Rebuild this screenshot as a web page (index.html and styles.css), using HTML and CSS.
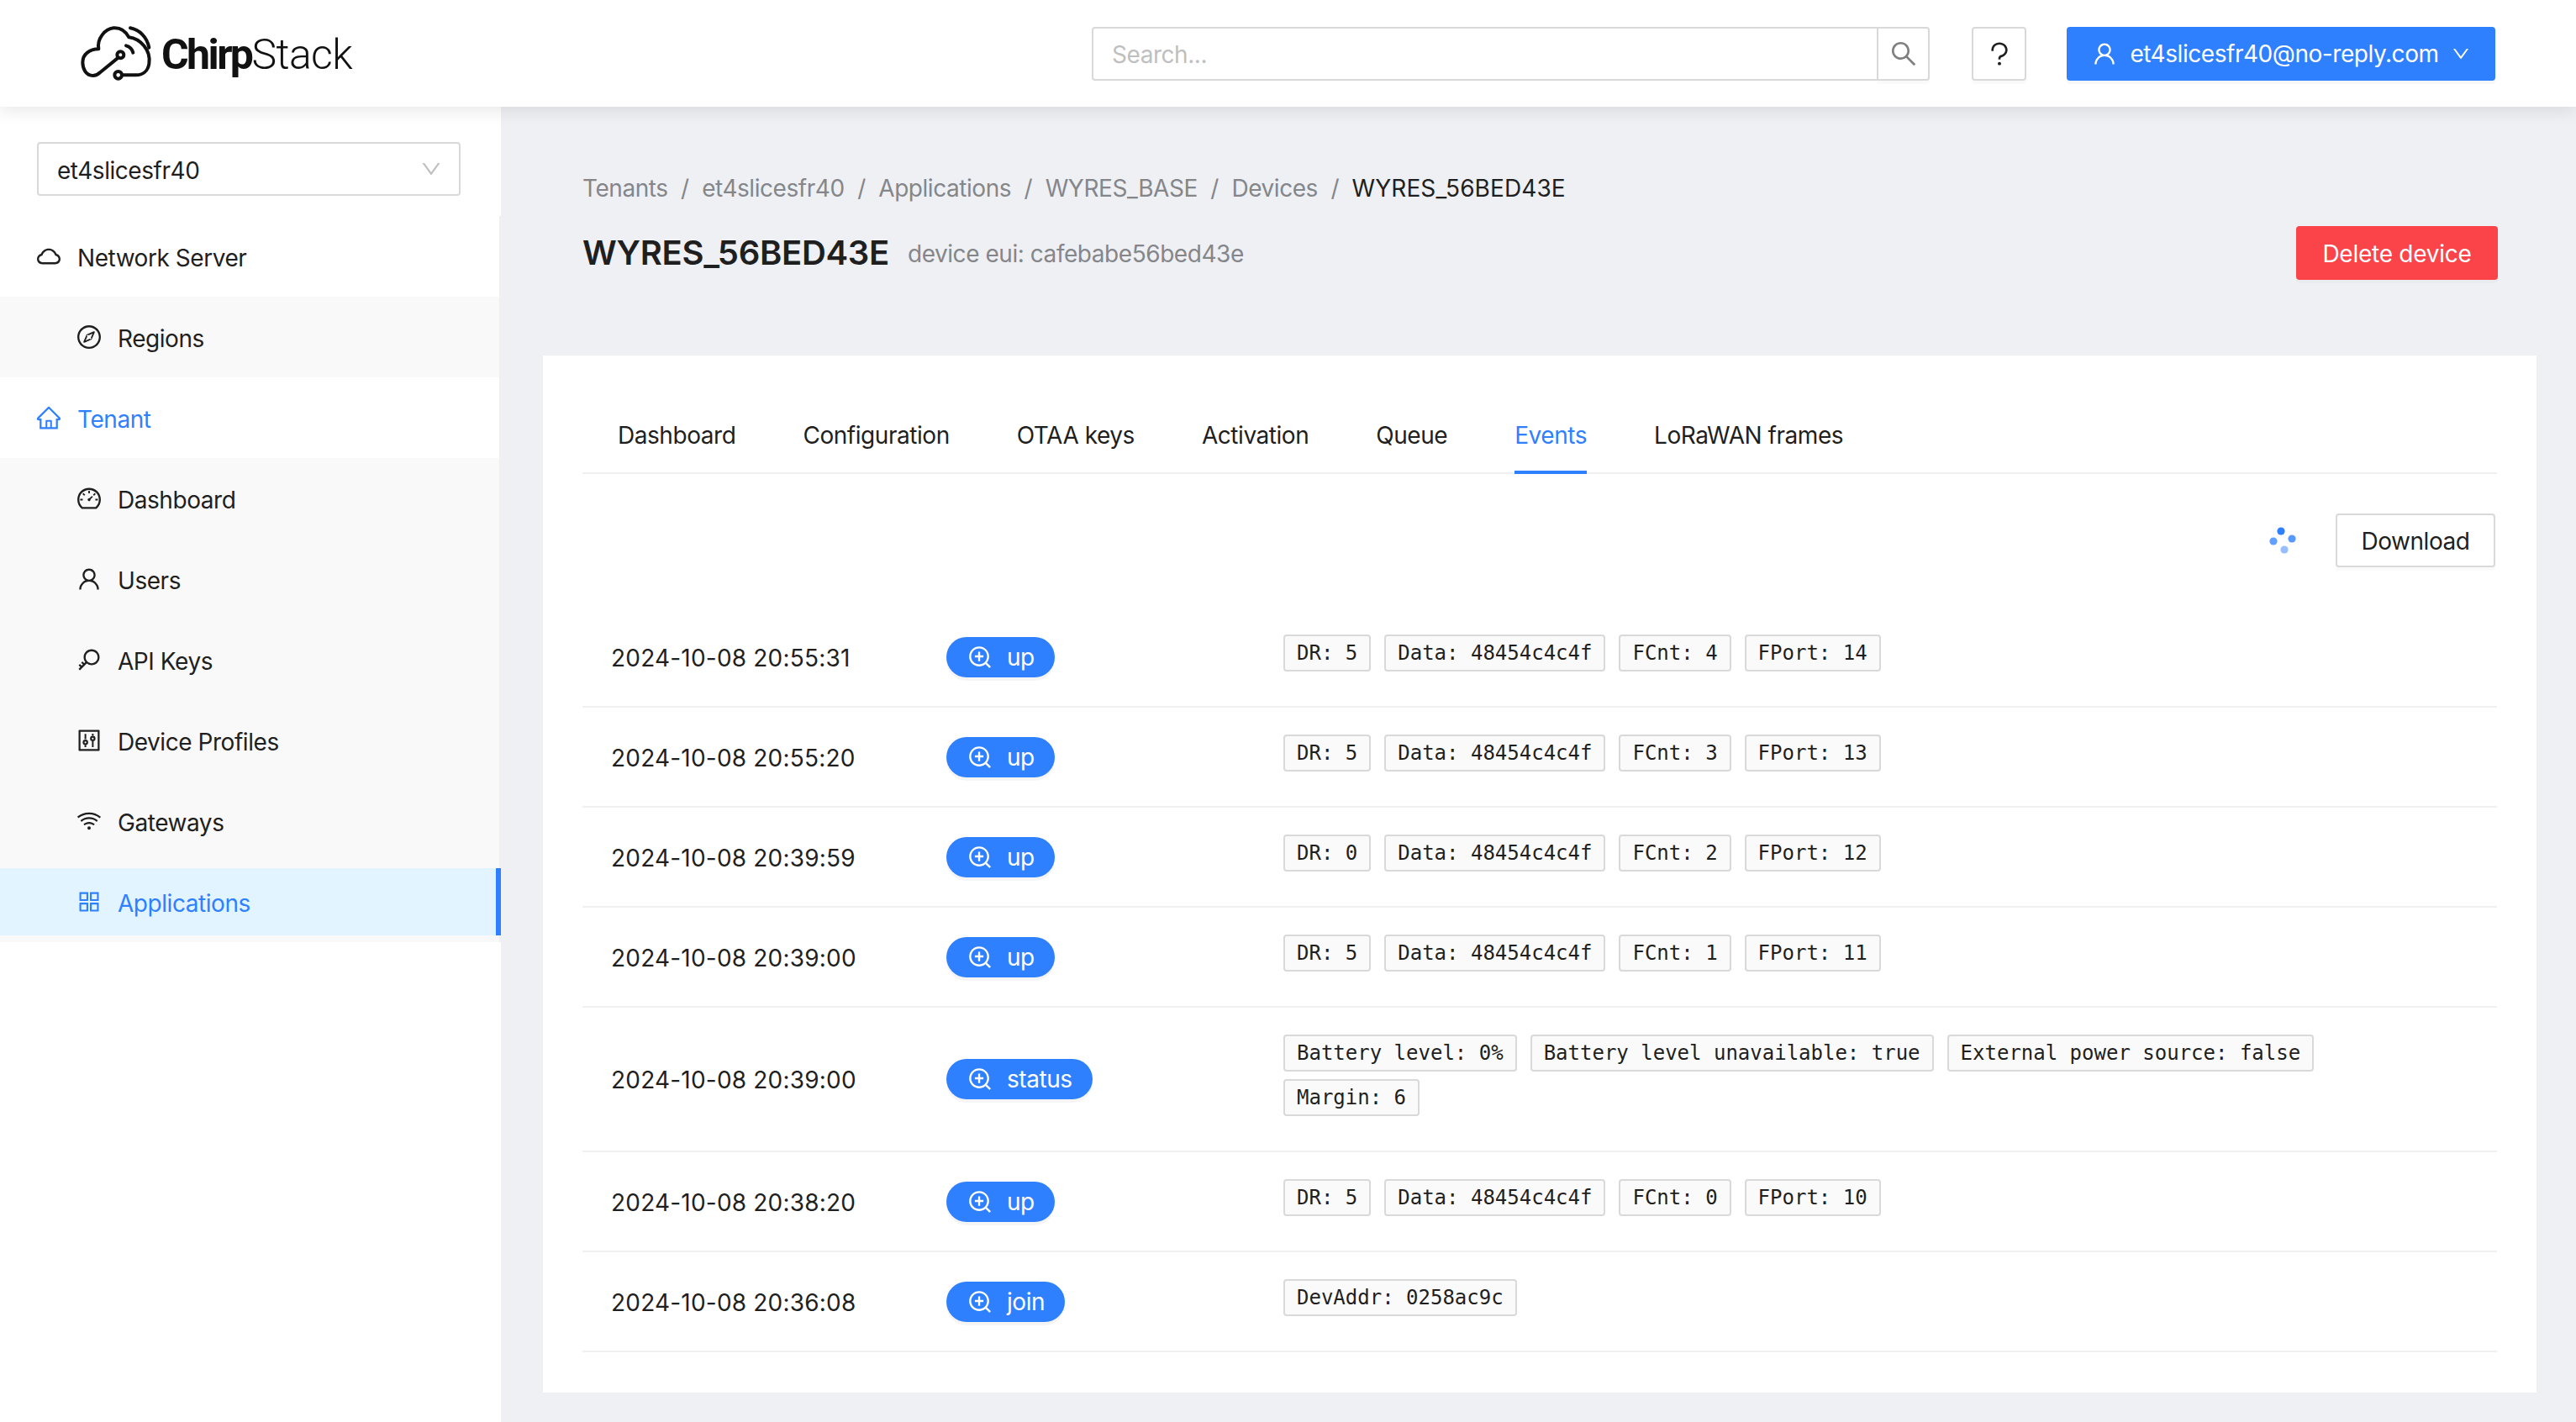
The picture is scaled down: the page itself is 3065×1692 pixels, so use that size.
FILE: index.html
```html
<!DOCTYPE html>
<html lang="en">
<head>
    <meta charset="UTF-8">
    <title>ChirpStack LoRaWAN Network Server</title>
    <link rel="stylesheet" href="styles.css">
</head>
<body>
    <svg class="sprites" xmlns="http://www.w3.org/2000/svg">
        <symbol id="i-zoom" viewBox="0 0 1024 1024"><path d="M637 443H519V309c0-4.4-3.6-8-8-8h-60c-4.4 0-8 3.6-8 8v134H325c-4.4 0-8 3.6-8 8v60c0 4.4 3.6 8 8 8h118v134c0 4.4 3.6 8 8 8h60c4.4 0 8-3.6 8-8V519h118c4.4 0 8-3.6 8-8v-60c0-4.4-3.6-8-8-8zm284 424L775 721c122.1-148.9 113.6-369.5-26-509-148-148.1-388.4-148.1-537 0-148.1 148.6-148.1 389 0 537 139.5 139.6 360.1 148.1 509 26l146 146c3.2 2.8 8.3 2.8 11 0l43-43c2.8-2.7 2.8-7.8 0-11zM696 696c-118.8 118.7-311.2 118.7-430 0-118.7-118.8-118.7-311.2 0-430 118.8-118.7 311.2-118.7 430 0 118.7 118.8 118.7 311.2 0 430z"/></symbol>
        <symbol id="i-down" viewBox="0 0 1024 1024"><path d="M884 256h-75c-5.1 0-9.9 2.5-12.9 6.6L512 654.2 227.9 262.6c-3-4.1-7.8-6.6-12.9-6.6h-75c-6.5 0-10.3 7.4-6.5 12.7l352.6 486.1c12.8 17.6 39 17.6 51.7 0l352.6-486.1c3.9-5.3.1-12.7-6.4-12.7z"/></symbol>
        <symbol id="i-user" viewBox="0 0 1024 1024"><path d="M858.5 763.6a374 374 0 0 0-80.6-119.5 375.63 375.63 0 0 0-119.5-80.6c-.4-.2-.8-.3-1.2-.5C719.5 518 760 444.7 760 362c0-137-111-248-248-248S264 225 264 362c0 82.7 40.5 156 102.8 201.1-.4.2-.8.3-1.2.5-44.8 18.9-85 46-119.5 80.6a375.63 375.63 0 0 0-80.6 119.5A371.7 371.7 0 0 0 136 901.8a8 8 0 0 0 8 8.2h60c4.4 0 7.9-3.5 8-7.8 2-77.2 33-149.5 87.8-204.3 56.7-56.7 132-87.9 212.2-87.9s155.5 31.2 212.2 87.9C779 752.7 810 825 812 902.2c.1 4.4 3.6 7.8 8 7.8h60a8 8 0 0 0 8-8.2c-1-47.8-10.9-94.3-29.5-138.2zM512 534c-45.9 0-89.1-17.9-121.6-50.4S340 407.9 340 362c0-45.9 17.9-89.1 50.4-121.6S466.1 190 512 190s89.1 17.9 121.6 50.4S684 316.1 684 362c0 45.9-17.9 89.1-50.4 121.6S557.9 534 512 534z"/></symbol>
    </svg>

    <header class="topbar">
        <div class="logo">
            <svg class="logo-mark" viewBox="0 0 300 225" fill="none" stroke="#111" stroke-width="12" stroke-linecap="round" stroke-linejoin="round">
                <path d="M152 128L88 180Q75 192 62 192C35 192 25 165 25 145C25 115 50 97 82 97C75 60 105 25 135 22C165 20 182 40 190 55C230 60 270 100 262 150C258 175 240 190 215 190H166"/>
                <circle cx="160" cy="118" r="12"/>
                <circle cx="152" cy="190" r="13"/>
                <path d="M195 22C228 28 255 55 262 92"/>
                <path d="M180 85C192 88 202 98 205 110"/>
            </svg>
            <span class="logo-text"><b>Chirp</b>Stack</span>
        </div>
        <div class="search">
            <div class="search-input">Search...</div>
            <div class="search-btn">
                <svg class="icon icon-large" viewBox="0 0 1024 1024"><path d="M909.6 854.5L649.9 594.8C690.2 542.7 712 479 712 412c0-80.2-31.3-155.4-87.9-212.1-56.6-56.7-132-87.9-212.1-87.9s-155.5 31.3-212.1 87.9C143.2 256.5 112 331.8 112 412c0 80.1 31.3 155.5 87.9 212.1C256.5 680.8 331.8 712 412 712c67 0 130.6-21.8 182.7-62l259.7 259.6a8.2 8.2 0 0 0 11.6 0l43.6-43.5a8.2 8.2 0 0 0 0-11.6zM570.4 570.4C528 612.7 471.8 636 412 636s-116-23.3-158.4-65.6C211.3 528 188 471.8 188 412s23.3-116.1 65.6-158.4C296 211.3 352.2 188 412 188s116.1 23.2 158.4 65.6S636 352.2 636 412s-23.3 116.1-65.6 158.4z"/></svg>
            </div>
        </div>
        <div class="help-btn">
            <svg class="icon icon-large" viewBox="0 0 1024 1024"><path d="M764 280.9c-14-30.6-33.9-58.1-59.3-81.6C653.1 151.4 584.6 125 512 125s-141.1 26.4-192.7 74.2c-25.4 23.6-45.3 51-59.3 81.7-14.6 32-22 65.9-22 100.9v27c0 6.2 5 11.2 11.2 11.2h54c6.2 0 11.2-5 11.2-11.2v-27c0-99.5 88.6-180.4 197.6-180.4s197.6 80.9 197.6 180.4c0 40.8-14.5 79.2-42 111.2-27.2 31.7-65.6 54.4-108.1 64-24.3 5.5-46.2 19.2-61.7 38.8a110.85 110.85 0 0 0-23.9 68.6v31.4c0 6.2 5 11.2 11.2 11.2h54c6.2 0 11.2-5 11.2-11.2v-31.4c0-15.7 10.9-29.5 26-32.9 58.4-13.2 111.4-44.7 149.3-88.7 19.1-22.3 34-47.1 44.3-74 10.7-27.9 16.1-57.2 16.1-87 0-35-7.4-69-22-100.9zM512 787c-30.9 0-56 25.1-56 56s25.1 56 56 56 56-25.1 56-56-25.1-56-56-56z"/></svg>
        </div>
        <div class="user-btn">
            <svg class="icon"><use href="#i-user"/></svg>
            <span>et4slicesfr40@no-reply.com</span>
            <svg class="icon icon-small"><use href="#i-down"/></svg>
        </div>
    </header>

    <div class="layout">
        <aside class="sidebar">
            <div class="tenant-select">
                <span>et4slicesfr40</span>
                <svg class="icon"><use href="#i-down"/></svg>
            </div>
            <nav class="menu">
                <div class="menu-top">
                    <div class="menu-item">
                        <svg class="icon" viewBox="0 0 1024 1024"><path d="M811.4 418.7C765.6 297.9 648.9 212 512.2 212S258.8 297.8 213 418.6C127.3 441.1 64 519.1 64 612c0 110.5 89.5 200 199.9 200h496.2C870.5 812 960 722.5 960 612c0-92.7-63.1-170.7-148.6-193.3zm36.3 281a123.07 123.07 0 0 1-87.6 36.3H263.9c-33.1 0-64.2-12.9-87.6-36.3A123.3 123.3 0 0 1 140 612c0-28 9.1-54.3 26.2-76.3a125.7 125.7 0 0 1 66.1-43.7l37.9-9.9 13.9-36.6c8.6-22.8 20.6-44.1 35.7-63.4a245.6 245.6 0 0 1 52.4-49.9c41.1-28.9 89.5-44.2 140-44.2s98.9 15.3 140 44.2c19.9 14 37.5 30.8 52.4 49.9 15.1 19.3 27.1 40.6 35.7 63.4l13.8 36.5 37.8 10c54.3 14.5 92.1 63.8 92.1 120 0 33.1-12.9 64.3-36.3 87.7z"/></svg>
                        <span>Network Server</span>
                    </div>
                </div>
                <div class="menu-sub">
                    <div class="menu-item">
                        <svg class="icon" viewBox="0 0 1024 1024"><path d="M512 64C264.6 64 64 264.6 64 512s200.6 448 448 448 448-200.6 448-448S759.4 64 512 64zm0 820c-205.4 0-372-166.6-372-372s166.6-372 372-372 372 166.6 372 372-166.6 372-372 372zm198.4-588.1a32 32 0 0 0-24.5.5L414.9 415 296.4 686c-3.6 8.2-3.6 17.5 0 25.7 3.4 7.8 9.7 13.9 17.7 17 3.8 1.5 7.7 2.2 11.7 2.2 4.4 0 8.7-.9 12.8-2.7l271-118.6 118.5-271a32.06 32.06 0 0 0-17.7-42.7zM576.8 534.4l26.2 26.2-42.4 42.4-26.2-26.2L380 644.4 447.5 490 422 464.4l42.4-42.4 25.5 25.5L644.4 380l-67.6 154.4z"/></svg>
                        <span>Regions</span>
                    </div>
                </div>
                <div class="menu-top">
                    <div class="menu-item menu-active">
                        <svg class="icon" viewBox="0 0 1024 1024"><path d="M946.5 505L560.1 118.8l-25.9-25.9a31.5 31.5 0 0 0-44.4 0L77.5 505a63.9 63.9 0 0 0-18.8 46c.4 35.2 29.7 63.3 64.9 63.3h42.5V940h691.8V614.3h43.4c17.1 0 33.2-6.7 45.3-18.8a63.6 63.6 0 0 0 18.7-45.3c0-17-6.7-33.1-18.8-45.2zM568 868H456V664h112v204zm217.9-325.7V868H632V640c0-22.1-17.9-40-40-40H432c-22.1 0-40 17.9-40 40v228H238.1V542.3h-96l370-369.7 23.1 23.1L882 542.3h-96.1z"/></svg>
                        <span>Tenant</span>
                    </div>
                </div>
                <div class="menu-sub">
                    <div class="menu-item">
                        <svg class="icon" viewBox="0 0 1024 1024"><path d="M924.8 385.6a446.7 446.7 0 0 0-96-142.4 446.7 446.7 0 0 0-142.4-96C631.1 123.8 572.5 112 512 112s-119.1 11.8-174.4 35.2a446.7 446.7 0 0 0-142.4 96 446.7 446.7 0 0 0-96 142.4C75.8 440.9 64 499.5 64 560c0 132.7 58.3 257.7 159.9 343.1l1.7 1.4c5.8 4.8 13.1 7.5 20.6 7.5h531.7c7.5 0 14.8-2.7 20.6-7.5l1.7-1.4C901.7 817.7 960 692.7 960 560c0-60.5-11.9-119.1-35.2-174.4zM761.4 836H262.6A371.12 371.12 0 0 1 140 560c0-99.4 38.7-192.8 109-263 70.3-70.3 163.7-109 263-109 99.4 0 192.8 38.7 263 109 70.3 70.3 109 163.7 109 263 0 105.6-44.5 205.5-122.6 276zM623.5 421.5a8.03 8.03 0 0 0-11.3 0L527.7 506c-18.7-5-39.4-.2-54.1 14.5a55.95 55.95 0 0 0 0 79.2 55.95 55.95 0 0 0 79.2 0 55.87 55.87 0 0 0 14.5-54.1l84.5-84.5c3.1-3.1 3.1-8.2 0-11.3l-28.3-28.3zM490 320h44c4.4 0 8-3.6 8-8v-80c0-4.4-3.6-8-8-8h-44c-4.4 0-8 3.6-8 8v80c0 4.4 3.6 8 8 8zm260 218v44c0 4.4 3.6 8 8 8h80c4.4 0 8-3.6 8-8v-44c0-4.4-3.6-8-8-8h-80c-4.4 0-8 3.6-8 8zm12.7-197.2l-31.1-31.1a8.03 8.03 0 0 0-11.3 0l-56.6 56.6a8.03 8.03 0 0 0 0 11.3l31.1 31.1c3.1 3.1 8.2 3.1 11.3 0l56.6-56.6c3.1-3.1 3.1-8.2 0-11.3zm-458.6-31.1a8.03 8.03 0 0 0-11.3 0l-31.1 31.1a8.03 8.03 0 0 0 0 11.3l56.6 56.6c3.1 3.1 8.2 3.1 11.3 0l31.1-31.1c3.1-3.1 3.1-8.2 0-11.3l-56.6-56.6zM262 530h-80c-4.4 0-8 3.6-8 8v44c0 4.4 3.6 8 8 8h80c4.4 0 8-3.6 8-8v-44c0-4.4-3.6-8-8-8z"/></svg>
                        <span>Dashboard</span>
                    </div>
                    <div class="menu-item">
                        <svg class="icon"><use href="#i-user"/></svg>
                        <span>Users</span>
                    </div>
                    <div class="menu-item">
                        <svg class="icon" viewBox="0 0 1024 1024"><path d="M608 112c-167.9 0-304 136.1-304 304 0 70.3 23.9 135 63.9 186.5l-41.1 41.1-62.3-62.3a8.15 8.15 0 0 0-11.4 0l-39.8 39.8a8.15 8.15 0 0 0 0 11.4l62.3 62.3-44.9 44.9-62.3-62.3a8.15 8.15 0 0 0-11.4 0l-39.8 39.8a8.15 8.15 0 0 0 0 11.4l62.3 62.3-65.3 65.3a8.03 8.03 0 0 0 0 11.3l42.3 42.3c3.1 3.1 8.2 3.1 11.3 0l253.6-253.6A304.06 304.06 0 0 0 608 720c167.9 0 304-136.1 304-304S775.9 112 608 112zm161.2 465.2C726.2 620.3 668.9 644 608 644c-60.9 0-118.2-23.7-161.2-66.8-43.1-43-66.8-100.3-66.8-161.2 0-60.9 23.7-118.2 66.8-161.2 43-43.1 100.3-66.8 161.2-66.8 60.9 0 118.2 23.7 161.2 66.8 43.1 43 66.8 100.3 66.8 161.2 0 60.9-23.7 118.2-66.8 161.2z"/></svg>
                        <span>API Keys</span>
                    </div>
                    <div class="menu-item">
                        <svg class="icon" viewBox="0 0 1024 1024"><path d="M880 112H144c-17.7 0-32 14.3-32 32v736c0 17.7 14.3 32 32 32h736c17.7 0 32-14.3 32-32V144c0-17.7-14.3-32-32-32zm-40 728H184V184h656v656z"/><path d="M340 260h64v200h-64zM340 680h64v90h-64zM620 256h64v80h-64zM620 540h64v230h-64z"/><path fill-rule="evenodd" d="M372 480a104 104 0 1 0 0 208 104 104 0 1 0 0-208zm0 68a36 36 0 1 1 0 72 36 36 0 1 1 0-72zM652 336a104 104 0 1 0 0 208 104 104 0 1 0 0-208zm0 68a36 36 0 1 1 0 72 36 36 0 1 1 0-72z"/></svg>
                        <span>Device Profiles</span>
                    </div>
                    <div class="menu-item">
                        <svg class="icon" viewBox="0 0 1024 1024"><path d="M723 620.5C666.8 571.6 593.4 542 513 542s-153.8 29.6-210.1 78.6a8.1 8.1 0 0 0-.8 11.2l36 42.9c2.9 3.4 8 3.8 11.4.9C393.1 637.2 450.3 614 513 614s119.9 23.2 163.5 61.5c3.4 2.9 8.5 2.5 11.4-.9l36-42.9c2.8-3.3 2.4-8.3-.9-11.2zm117.4-140.1C751.7 406.5 637.6 362 513 362s-238.7 44.5-327.5 118.4a8.05 8.05 0 0 0-1 11.3l36 42.9c2.8 3.4 7.9 3.8 11.2 1C308 472.2 406.1 434 513 434s205 38.2 281.2 101.6c3.4 2.8 8.4 2.4 11.2-1l36-42.9c2.8-3.4 2.4-8.5-1-11.3zm116.7-139C835.7 241.8 680.3 182 511 182c-168.2 0-322.6 59-443.7 157.4a8 8 0 0 0-1.1 11.4l36 42.9c2.8 3.3 7.8 3.8 11.1 1.1C222 306.7 360.3 254 511 254c151.8 0 291 53.5 400 142.7 3.4 2.8 8.4 2.3 11.2-1.1l36-42.9c2.9-3.4 2.4-8.5-1.1-11.3zM448 778a64 64 0 1 0 128 0 64 64 0 1 0-128 0z"/></svg>
                        <span>Gateways</span>
                    </div>
                    <div class="menu-item menu-selected">
                        <svg class="icon" viewBox="0 0 1024 1024"><path d="M464 144H160c-8.8 0-16 7.2-16 16v304c0 8.8 7.2 16 16 16h304c8.8 0 16-7.2 16-16V160c0-8.8-7.2-16-16-16zm-52 268H212V212h200v200zm452-268H560c-8.8 0-16 7.2-16 16v304c0 8.8 7.2 16 16 16h304c8.8 0 16-7.2 16-16V160c0-8.8-7.2-16-16-16zm-52 268H612V212h200v200zM464 544H160c-8.8 0-16 7.2-16 16v304c0 8.8 7.2 16 16 16h304c8.8 0 16-7.2 16-16V560c0-8.8-7.2-16-16-16zm-52 268H212V612h200v200zm452-268H560c-8.8 0-16 7.2-16 16v304c0 8.8 7.2 16 16 16h304c8.8 0 16-7.2 16-16V560c0-8.8-7.2-16-16-16zm-52 268H612V612h200v200z"/></svg>
                        <span>Applications</span>
                    </div>
                </div>
            </nav>
        </aside>

        <main class="content">
            <div class="page-head">
                <div class="breadcrumb">
                    <span>Tenants</span><i>/</i>
                    <span>et4slicesfr40</span><i>/</i>
                    <span>Applications</span><i>/</i>
                    <span>WYRES_BASE</span><i>/</i>
                    <span>Devices</span><i>/</i>
                    <span class="current">WYRES_56BED43E</span>
                </div>
                <div class="title-row">
                    <h1>WYRES_56BED43E</h1>
                    <span class="subtitle">device eui: cafebabe56bed43e</span>
                    <div class="btn-delete">Delete device</div>
                </div>
            </div>

            <section class="card">
                <div class="tabs">
                    <div class="tab">Dashboard</div>
                    <div class="tab">Configuration</div>
                    <div class="tab">OTAA keys</div>
                    <div class="tab">Activation</div>
                    <div class="tab">Queue</div>
                    <div class="tab tab-active">Events</div>
                    <div class="tab">LoRaWAN frames</div>
                </div>

                <div class="toolbar">
                    <svg class="spinner" viewBox="0 0 32 32">
                        <circle cx="14" cy="5" r="4.6" fill="#2e80ff"/>
                        <circle cx="27" cy="14" r="4.6" fill="#2e80ff" opacity=".8"/>
                        <circle cx="18" cy="27" r="4.6" fill="#2e80ff" opacity=".5"/>
                        <circle cx="5" cy="17" r="4.6" fill="#2e80ff" opacity=".75"/>
                    </svg>
                    <div class="btn-download">Download</div>
                </div>

                <div class="event-row">
                    <div class="event-time">2024-10-08 20:55:31</div>
                    <div class="event-type"><span class="badge"><svg class="icon"><use href="#i-zoom"/></svg>up</span></div>
                    <div class="tags"><span class="tag">DR: 5</span><span class="tag">Data: 48454c4c4f</span><span class="tag">FCnt: 4</span><span class="tag">FPort: 14</span></div>
                </div>
                <div class="event-row">
                    <div class="event-time">2024-10-08 20:55:20</div>
                    <div class="event-type"><span class="badge"><svg class="icon"><use href="#i-zoom"/></svg>up</span></div>
                    <div class="tags"><span class="tag">DR: 5</span><span class="tag">Data: 48454c4c4f</span><span class="tag">FCnt: 3</span><span class="tag">FPort: 13</span></div>
                </div>
                <div class="event-row">
                    <div class="event-time">2024-10-08 20:39:59</div>
                    <div class="event-type"><span class="badge"><svg class="icon"><use href="#i-zoom"/></svg>up</span></div>
                    <div class="tags"><span class="tag">DR: 0</span><span class="tag">Data: 48454c4c4f</span><span class="tag">FCnt: 2</span><span class="tag">FPort: 12</span></div>
                </div>
                <div class="event-row">
                    <div class="event-time">2024-10-08 20:39:00</div>
                    <div class="event-type"><span class="badge"><svg class="icon"><use href="#i-zoom"/></svg>up</span></div>
                    <div class="tags"><span class="tag">DR: 5</span><span class="tag">Data: 48454c4c4f</span><span class="tag">FCnt: 1</span><span class="tag">FPort: 11</span></div>
                </div>
                <div class="event-row">
                    <div class="event-time">2024-10-08 20:39:00</div>
                    <div class="event-type"><span class="badge"><svg class="icon"><use href="#i-zoom"/></svg>status</span></div>
                    <div class="tags"><span class="tag">Battery level: 0%</span><span class="tag">Battery level unavailable: true</span><span class="tag">External power source: false</span><span class="tag">Margin: 6</span></div>
                </div>
                <div class="event-row">
                    <div class="event-time">2024-10-08 20:38:20</div>
                    <div class="event-type"><span class="badge"><svg class="icon"><use href="#i-zoom"/></svg>up</span></div>
                    <div class="tags"><span class="tag">DR: 5</span><span class="tag">Data: 48454c4c4f</span><span class="tag">FCnt: 0</span><span class="tag">FPort: 10</span></div>
                </div>
                <div class="event-row">
                    <div class="event-time">2024-10-08 20:36:08</div>
                    <div class="event-type"><span class="badge"><svg class="icon"><use href="#i-zoom"/></svg>join</span></div>
                    <div class="tags"><span class="tag">DevAddr: 0258ac9c</span></div>
                </div>
            </section>
        </main>
    </div>
</body>
</html>
```

FILE: styles.css
```css
* {
    box-sizing: border-box;
}
body {
    margin: 0;
    height: 1692px;
    overflow: hidden;
    display: flex;
    flex-direction: column;
    background: #eef0f4;
    color: #1f1f1f;
    font-family: Inter, "Noto Sans", sans-serif;
    font-size: 28px;
    line-height: 44px;
    letter-spacing: -0.45px;
}
.sprites {
    display: none;
}
.icon {
    width: 32px;
    height: 32px;
    flex: none;
    fill: currentColor;
}
.icon-small {
    width: 24px;
    height: 24px;
}
.icon-large {
    width: 36px;
    height: 36px;
}

/* top bar */
.topbar {
    height: 127px;
    flex: none;
    display: flex;
    align-items: center;
    padding: 0 96px 0 90px;
    background: white;
    box-shadow: 0 4px 20px rgba(0, 0, 0, 0.1);
    position: relative;
    z-index: 2;
}
.logo {
    display: flex;
    align-items: center;
    gap: 2px;
    margin-right: auto;
}
.logo-mark {
    width: 100px;
    height: 75px;
}
.logo-text {
    margin-top: 3px;
    font-family: Roboto, sans-serif;
    font-size: 50px;
    font-weight: 300;
    line-height: 60px;
    letter-spacing: -0.6px;
    color: #111;
}
.logo-text b {
    font-weight: 700;
    letter-spacing: -2.6px;
}
.search {
    display: flex;
    width: 997px;
    height: 64px;
}
.search-input {
    flex: 1;
    padding: 9px 22px 7px;
    color: #bfbfbf;
    border: 2px solid #d9d9d9;
    border-radius: 4px 0 0 4px;
}
.search-btn {
    width: 63px;
    margin-left: -2px;
    display: flex;
    align-items: center;
    justify-content: center;
    color: #7f7f7f;
    border: 2px solid #d9d9d9;
    border-radius: 0 4px 4px 0;
    box-shadow: 0 4px 0 rgba(0, 0, 0, 0.02);
}
.help-btn {
    width: 65px;
    height: 64px;
    margin-left: 50px;
    display: flex;
    align-items: center;
    justify-content: center;
    border: 2px solid #d9d9d9;
    border-radius: 4px;
    box-shadow: 0 4px 0 rgba(0, 0, 0, 0.02);
}
.user-btn {
    width: 510px;
    height: 64px;
    margin-left: 48px;
    display: flex;
    align-items: center;
    justify-content: center;
    gap: 14px;
    color: white;
    background: #2e80ff;
    border-radius: 4px;
    box-shadow: 0 4px 0 rgba(0, 0, 0, 0.03);
}

/* sidebar */
.layout {
    flex: 1;
    display: flex;
    min-height: 0;
}
.sidebar {
    width: 596px;
    flex: none;
    background: white;
}
.tenant-select {
    height: 64px;
    margin: 42px 48px 24px 44px;
    padding: 0 19px 0 22px;
    display: flex;
    align-items: center;
    justify-content: space-between;
    border: 2px solid #d9d9d9;
    border-radius: 4px;
}
.tenant-select span {
    padding-top: 3px;
}
.tenant-select .icon {
    width: 28px;
    height: 28px;
    color: #bfbfbf;
}
.menu {
    border-right: 2px solid #f0f0f0;
}
.menu-top {
    padding: 8px 0;
}
.menu-top .menu-item {
    padding-left: 42px;
}
.menu-sub {
    padding: 8px 0;
    display: flex;
    flex-direction: column;
    gap: 16px;
    background: #f9f9f9;
}
.menu-sub .menu-item {
    padding-left: 90px;
}
.menu-item {
    height: 80px;
    display: flex;
    align-items: center;
    gap: 18px;
}
.menu-item span {
    padding-top: 3px;
}
.menu-active {
    color: #2e80ff;
}
.menu-selected {
    margin-right: -2px;
    color: #2e80ff;
    background: #e1f4ff;
    border-right: 6px solid #2e80ff;
}

/* main part */
.content {
    flex: 1;
    min-width: 0;
    padding: 75px 47px 0 50px;
}
.page-head {
    padding: 0 46px 0 47px;
}
.breadcrumb {
    display: flex;
    color: #85868a;
}
.breadcrumb i {
    font-style: normal;
    margin: 0 15.5px;
}
.breadcrumb .current {
    color: #1f1f1f;
    letter-spacing: 0.1px;
}
.title-row {
    margin-top: 23px;
    height: 64px;
    display: flex;
    align-items: center;
}
h1 {
    margin: 0;
    font-size: 40px;
    font-weight: 600;
    line-height: 64px;
    letter-spacing: -0.3px;
}
.subtitle {
    margin-left: 22px;
    padding-top: 2px;
    color: #85868a;
}
.btn-delete {
    width: 240px;
    height: 64px;
    margin-left: auto;
    text-align: center;
    line-height: 66px;
    letter-spacing: -0.25px;
    color: white;
    background: #fa444a;
    border-radius: 4px;
    box-shadow: 0 4px 0 rgba(0, 0, 0, 0.02);
}
.card {
    margin-top: 90px;
    padding: 49px 47px 48px;
    background: white;
}
.tabs {
    height: 92px;
    display: flex;
    gap: 80px;
    padding-left: 42px;
    border-bottom: 2px solid #f0f0f0;
}
.tab {
    padding: 24px 0;
    height: 92px;
}
.tab-active {
    color: #2e80ff;
    border-bottom: 4px solid #2e80ff;
}
.toolbar {
    margin: 47px 2px 48px 0;
    display: flex;
    align-items: center;
    justify-content: flex-end;
    gap: 47px;
}
.spinner {
    width: 32px;
    height: 32px;
}
.btn-download {
    width: 190px;
    height: 64px;
    text-align: center;
    line-height: 62px;
    border: 2px solid #d9d9d9;
    border-radius: 4px;
    box-shadow: 0 4px 0 rgba(0, 0, 0, 0.02);
}

/* events */
.event-row {
    display: grid;
    grid-template-columns: 399px 401px 1fr;
    align-items: center;
    padding: 32px 100px 32px 34px;
    border-bottom: 2px solid #f0f0f0;
}
.event-time {
    padding-top: 2px;
    letter-spacing: 0.2px;
}
.event-type {
    display: flex;
}
.badge {
    display: flex;
    align-items: center;
    gap: 16px;
    height: 48px;
    padding: 0 24px;
    color: white;
    background: #2e80ff;
    border-radius: 24px;
    box-shadow: 0 4px 0 rgba(0, 0, 0, 0.04);
}
.tags {
    display: flex;
    flex-wrap: wrap;
    gap: 9px 16px;
    padding-bottom: 9px;
}
.tag {
    height: 44px;
    padding: 0 14px;
    font-family: "DejaVu Sans Mono", monospace;
    font-size: 24px;
    line-height: 41px;
    letter-spacing: 0;
    background: #fafafa;
    border: 2px solid #d9d9d9;
    border-radius: 4px;
}
```
